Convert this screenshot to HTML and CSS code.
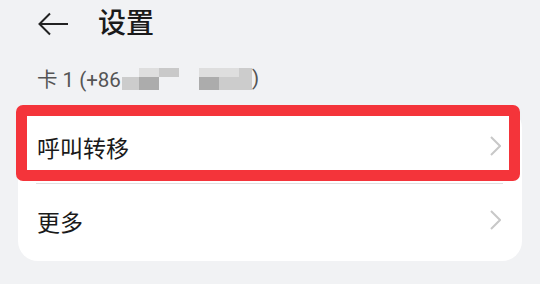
FILE: index.html
```html
<!DOCTYPE html>
<html lang="zh-CN">
<head>
  <meta charset="UTF-8">
  <meta name="viewport" content="width=device-width, initial-scale=1.0">
  <title>设置</title>
  <link rel="stylesheet" href="styles.css">
</head>
<body>
  <div class="header">
    <svg class="back" width="31" height="24" viewBox="0 0 31 24">
      <polyline points="12,1.5 1.5,12 12,22.5" fill="none" stroke="#222" stroke-width="2" stroke-linejoin="miter"/>
      <line x1="1.5" y1="12" x2="30" y2="12" stroke="#222" stroke-width="2"/>
    </svg>
    <h1>设置</h1>
  </div>
  <div class="sim">
    <span>卡 1 (+86</span>
    <span class="mosaic">
      <span class="cell c-empty"></span><span class="cell c3"></span>
      <span class="cell c1"></span><span class="cell c4"></span>
      <span class="cell c2"></span><span class="cell c-empty"></span>
    </span>
    <span class="mosaic second">
      <span class="cell c1"></span><span class="cell c4"></span>
      <span class="cell c1"></span><span class="cell c3"></span>
      <span class="cell tall c3"></span>
    </span>
    <span>)</span>
  </div>
  <div class="card">
    <div class="row">
      <span class="label">呼叫转移</span>
      <svg class="chev" width="11" height="20" viewBox="0 0 11 20">
        <polyline points="1,1 10,10 1,19" fill="none" stroke="#c8c8c8" stroke-width="2"/>
      </svg>
      <div class="highlight"></div>
    </div>
    <div class="divider"></div>
    <div class="row">
      <span class="label">更多</span>
      <svg class="chev" width="11" height="20" viewBox="0 0 11 20">
        <polyline points="1,1 10,10 1,19" fill="none" stroke="#c8c8c8" stroke-width="2"/>
      </svg>
    </div>
  </div>
</body>
</html>
```

FILE: styles.css
```css
body {
  margin: 0;
  background: #f1f2f4;
  font-family: Roboto, "Noto Sans CJK SC", sans-serif;
  color: #1a1a1a;
}
.header {
  height: 48px;
  display: flex;
  align-items: center;
  padding-left: 38px;
  gap: 29px;
}
.header h1 {
  margin: 0;
  font-size: 28px;
  font-weight: 500;
  line-height: 1;
}
.sim {
  height: 60px;
  display: flex;
  align-items: center;
  padding-left: 37px;
  font-size: 20.5px;
  color: #555;
}
.mosaic {
  display: grid;
  grid-template-columns: 17px 20px 20px;
  grid-template-rows: 9px 13px;
  grid-auto-flow: column;
  margin-left: 1px;
  margin-top: 2px;
}
.mosaic.second {
  grid-template-columns: 20px 20px 13px;
  margin-left: 20px;
}
.cell.tall {
  grid-row: span 2;
}
.c1 { background: #dedede; }
.c2 { background: #c9c9c9; }
.c3 { background: #cccccc; }
.c4 { background: #acacac; }
.card {
  margin: 0 18px;
  background: #fff;
  border-radius: 20px;
  padding: 2px 0 3px;
}
.row {
  position: relative;
  height: 74px;
  display: flex;
  align-items: center;
  justify-content: space-between;
  padding: 0 21px 0 19px;
}
.row:first-child {
  height: 73px;
}
.label {
  font-size: 23px;
}
.chev {
  margin-top: -2px;
}
.divider {
  height: 1px;
  margin: 0 19px 0 18px;
  background: #e0e0e0;
}
.highlight {
  position: absolute;
  left: -2px;
  right: 2px;
  top: -5px;
  height: 76px;
  box-sizing: border-box;
  border: 11px solid #f4343a;
  border-radius: 7px;
}
```
